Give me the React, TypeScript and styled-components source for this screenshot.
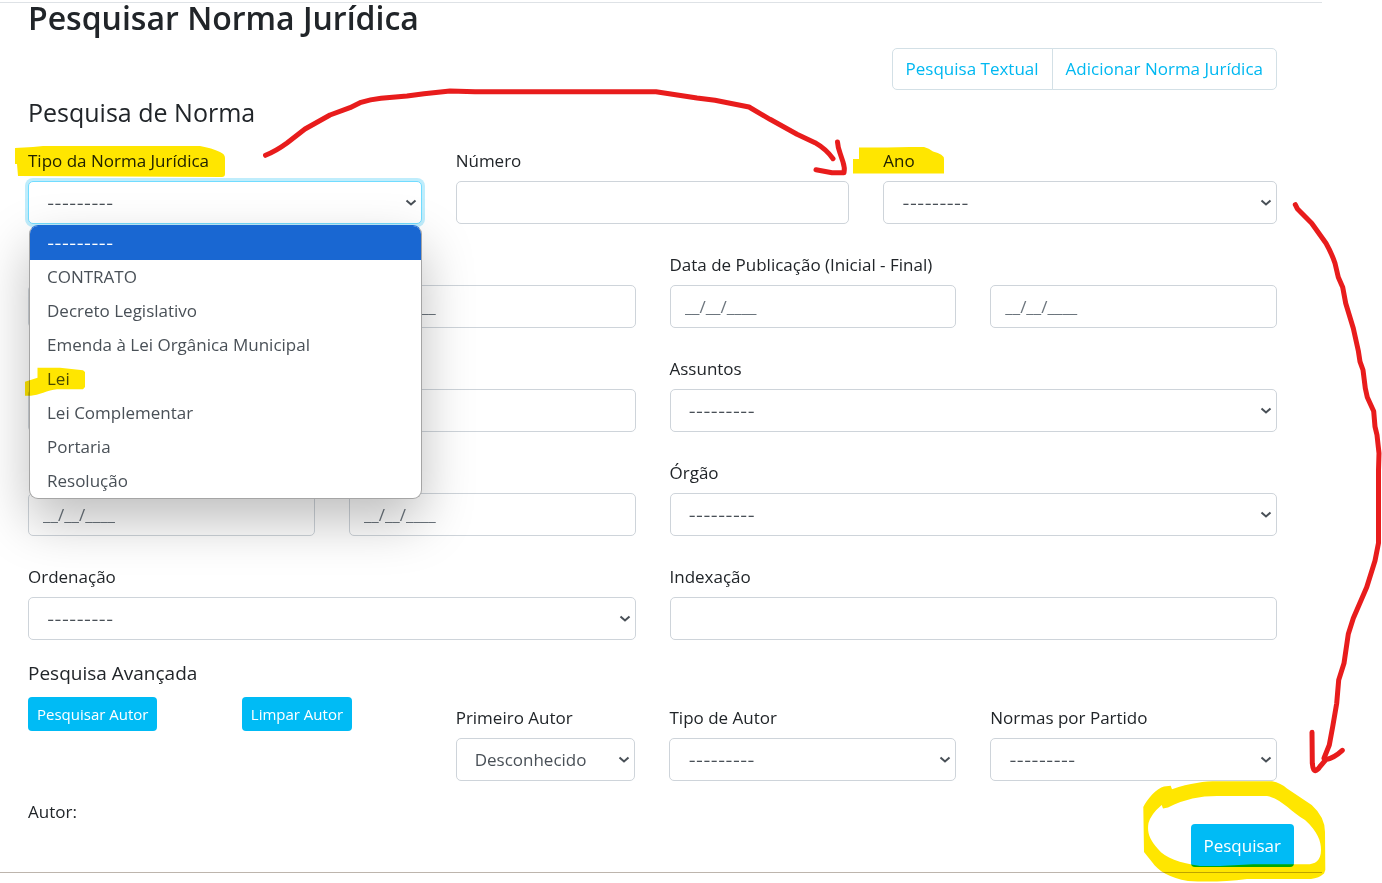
import React from "react";
import styled, { createGlobalStyle, css } from "styled-components";

const GlobalStyle = createGlobalStyle`
  *, *::before, *::after { box-sizing: border-box; }
  html { background: #fff; }
  body {
    margin: 0;
    background: #fff;
    color: #212529;
    font-family: "Open Sans", "Noto Sans", sans-serif;
    font-size: 17px;
    line-height: 26px;
  }
`;

const Page = styled.div`
  position: relative;
  padding: 2px 60px 10px 0;
  min-height: 100vh;
`;

const Main = styled.main`
  border-top: 1px solid #dee2e6;
  border-bottom: 1px solid #bdb5ad;
  padding: 0 45px 5px 28px;
`;

const Title = styled.h1`
  margin: 0;
  font-size: 32px;
  line-height: 30px;
  font-weight: 600;
`;

const Actions = styled.nav`
  display: flex;
  justify-content: flex-end;
  margin-top: 15px;
`;

const ActionLink = styled.a`
  padding: 7px 13px;
  border: 1px solid #d3e0e6;
  color: #00b8f1;
  text-decoration: none;

  &:first-child { border-radius: 5px 0 0 5px; }
  &:last-child { border-radius: 0 5px 5px 0; }
  & + & { margin-left: -1px; }
`;

const Legend = styled.h2`
  margin: 6px 0 20px;
  font-size: 25px;
  line-height: 32px;
  font-weight: 400;
`;

const Grid = styled.div`
  display: grid;
  grid-template-columns: repeat(12, minmax(0, 1fr));
  gap: 28px 34px;
  align-items: end;
`;

const Cell = styled.div<{ $span: number }>`
  position: relative;
  grid-column: span ${(p) => p.$span};
`;

const Label = styled.label`
  display: block;
  margin-bottom: 7px;
`;

const control = css`
  display: block;
  width: 100%;
  height: 43px;
  border: 1px solid #ced4da;
  border-radius: 5px;
  background: #fff;
  color: #495057;
  font: inherit;
  outline: none;
`;

const dashes = css`
  font-family: Inter, "Open Sans", sans-serif;
  font-size: 16px;
`;

const Input = styled.input`
  ${control}
  padding: 0 14px;
  &::placeholder { color: #6c757d; opacity: 1; }
`;

const NativeSelect = styled.select<{ $focused?: boolean; $empty?: boolean }>`
  ${control}
  appearance: none;
  padding: 0 24px 0 18px;
  ${(p) => p.$empty && dashes}
  ${(p) => p.$focused && css`
    border-color: #72dcff;
    box-shadow: 0 0 0 3px #bfedfc;
  `}
`;

const SelectBox = styled.div`
  position: relative;
`;

const Chevron = styled.svg`
  position: absolute;
  right: 5px;
  top: 17px;
  pointer-events: none;
`;

const Options = styled.ul`
  position: absolute;
  z-index: 2;
  top: calc(100% + 1px);
  left: 1px;
  right: 0;
  margin: 0;
  padding: 0;
  list-style: none;
  overflow: hidden;
  border: 1px solid #a5a5a5;
  border-top-color: #1967d2;
  border-radius: 9px;
  background: #fff;
  color: #495057;
  box-shadow: 0 22px 52px rgba(0, 0, 0, 0.26);
`;

const Option = styled.li<{ $active: boolean }>`
  padding: 4px 17px;
  background: ${(p) => (p.$active ? "#1967d2" : "transparent")};
  color: ${(p) => (p.$active ? "#fff" : "inherit")};
  ${(p) => p.$active && dashes}
`;

const Subtitle = styled.h3`
  margin: 19px 0 10px;
  font-size: 19px;
  line-height: 28px;
  font-weight: 400;
`;

const AdvancedGrid = styled(Grid)`
  align-items: start;
`;

const Field = styled.div`
  padding-top: 8px;
`;

const Button = styled.button<{ $small?: boolean }>`
  border: 0;
  border-radius: 4px;
  background: #00bbf5;
  color: #fff;
  font: inherit;
  white-space: nowrap;
  ${(p) => p.$small
    ? css`height: 34px; padding: 0 9px; font-size: 15px;`
    : css`height: 43px; padding: 0 13px;`}
`;

const Author = styled.p`
  margin: 18px 0 0;
`;

const Submit = styled.div`
  display: flex;
  justify-content: flex-end;
  margin: -1px -17px 0 0;
`;

const Overlay = styled.svg<{ $multiply?: boolean }>`
  position: absolute;
  z-index: 3;
  top: 0;
  left: 0;
  pointer-events: none;
  mix-blend-mode: ${(p) => (p.$multiply ? "multiply" : "normal")};
`;

const EMPTY = "---------";
const TYPES = [
  EMPTY,
  "CONTRATO",
  "Decreto Legislativo",
  "Emenda à Lei Orgânica Municipal",
  "Lei",
  "Lei Complementar",
  "Portaria",
  "Resolução",
];

type SelectProps = { id: string; value?: string; focused?: boolean; options?: string[] };

function Select({ id, value = EMPTY, focused, options = [value] }: SelectProps) {
  return (
    <SelectBox>
      <NativeSelect id={id} defaultValue={value} $focused={focused} $empty={value === EMPTY}>
        {options.map((o) => <option key={o}>{o}</option>)}
      </NativeSelect>
      <Chevron width="12" height="9" viewBox="0 0 12 9" fill="none" stroke="#495057" strokeWidth="2">
        <path d="M1.5 2.5 L6 6.5 L10.5 2.5" />
      </Chevron>
    </SelectBox>
  );
}

function DateInput({ name }: { name: string }) {
  return <Input id={name} aria-label={name} placeholder="__/__/____" />;
}

export default function App() {
  return (
    <>
      <GlobalStyle />
      <Page>
        <Main>
          <Title>Pesquisar Norma Jurídica</Title>
          <Actions>
            <ActionLink href="#textual">Pesquisa Textual</ActionLink>
            <ActionLink href="#adicionar">Adicionar Norma Jurídica</ActionLink>
          </Actions>
          <form onSubmit={(e) => e.preventDefault()}>
            <Legend>Pesquisa de Norma</Legend>
            <Grid>
              <Cell $span={4}>
                <Label htmlFor="tipo">Tipo da Norma Jurídica</Label>
                <Select id="tipo" focused options={TYPES} />
                <Options role="listbox" aria-label="Tipo da Norma Jurídica">
                  {TYPES.map((t, i) => (
                    <Option key={t} role="option" aria-selected={i === 0} $active={i === 0}>{t}</Option>
                  ))}
                </Options>
              </Cell>
              <Cell $span={4}>
                <Label htmlFor="numero">Número</Label>
                <Input id="numero" />
              </Cell>
              <Cell $span={4}>
                <Label htmlFor="ano">Ano</Label>
                <Select id="ano" />
              </Cell>

              <Cell $span={3}><DateInput name="data-inicial" /></Cell>
              <Cell $span={3}><DateInput name="data-final" /></Cell>
              <Cell $span={3}>
                <Label htmlFor="publicacao-inicial">Data de Publicação (Inicial - Final)</Label>
                <DateInput name="publicacao-inicial" />
              </Cell>
              <Cell $span={3}><DateInput name="publicacao-final" /></Cell>

              <Cell $span={6}><Input id="ementa" aria-label="ementa" /></Cell>
              <Cell $span={6}>
                <Label htmlFor="assuntos">Assuntos</Label>
                <Select id="assuntos" />
              </Cell>

              <Cell $span={3}><DateInput name="vigencia-inicial" /></Cell>
              <Cell $span={3}><DateInput name="vigencia-final" /></Cell>
              <Cell $span={6}>
                <Label htmlFor="orgao">Órgão</Label>
                <Select id="orgao" />
              </Cell>

              <Cell $span={6}>
                <Label htmlFor="ordenacao">Ordenação</Label>
                <Select id="ordenacao" />
              </Cell>
              <Cell $span={6}>
                <Label htmlFor="indexacao">Indexação</Label>
                <Input id="indexacao" />
              </Cell>
            </Grid>

            <Subtitle>Pesquisa Avançada</Subtitle>
            <AdvancedGrid>
              <Cell $span={2}><Button type="button" $small>Pesquisar Autor</Button></Cell>
              <Cell $span={2}><Button type="button" $small>Limpar Autor</Button></Cell>
              <Cell $span={2}>
                <Field>
                  <Label htmlFor="primeiro">Primeiro Autor</Label>
                  <Select id="primeiro" value="Desconhecido" />
                </Field>
              </Cell>
              <Cell $span={3}>
                <Field>
                  <Label htmlFor="tipo-autor">Tipo de Autor</Label>
                  <Select id="tipo-autor" />
                </Field>
              </Cell>
              <Cell $span={3}>
                <Field>
                  <Label htmlFor="partido">Normas por Partido</Label>
                  <Select id="partido" />
                </Field>
              </Cell>
            </AdvancedGrid>
            <Author>Autor:</Author>
            <Submit><Button type="submit">Pesquisar</Button></Submit>
          </form>
        </Main>

        <Overlay $multiply width="1382" height="883" viewBox="0 0 1382 883" fill="#ffe600" aria-hidden="true">
          <path d="M15 148 L33 147 L43 146 L200 146 Q212 148 220 152 Q225 154 225 158 V174 Q225 177 222 177 L18 176 L17 164 H15Z" />
          <path d="M859 147.5 H887 L910 147 H924 Q929 148 933 151.5 Q944 154 944 159 V173.5 H853 V159 H859Z" />
          <path d="M37.5 367.7 H60 L83 370.3 L85 372 V387 L83 389.3 H57 C48 390 38 395.5 31 395.7 H25 V381.7 L37.5 377.7Z" />
          <path
            fillRule="evenodd"
            d="M1170.7 785.7 L1172 789.3 C1190 783 1205 781.3 1217 781.3 H1272 Q1281 783 1287 788.5 L1311.7 805 Q1325 817 1325 832 L1325.3 870 L1324 873.5 Q1319 878 1311 879 H1247 C1225 882 1205 882 1188 881 C1170 878 1158 871 1152 862 L1144 852 L1143.3 807 C1147 799 1157 788 1164 786.5Z
               M1161.7 805 L1163 808.5 L1168 807.5 C1185 799 1200 796 1217 796 H1267 C1282 799 1291 812 1305 820 C1318 832 1321 841 1321 850 C1321 861 1315 864.3 1307 864.3 H1253 L1220 866 H1200 C1180 863 1165 858 1158 849 C1149 839 1147 832 1148.5 823 Q1151 814 1161.7 805Z"
          />
        </Overlay>
        <Overlay
          width="1382" height="883" viewBox="0 0 1382 883" aria-hidden="true"
          fill="none" stroke="#e81c1c" strokeWidth="5" strokeLinecap="round" strokeLinejoin="round"
        >
          <path d="M265.5 155.3 Q276 151 287 143 L305 129 L330 115 L350 107.7 L361 102.3 Q370 99.5 381 98.3 L407 96 L424 93.7 L450 91 L475 91.7 H656 L697 98 L715 100.3 L730 103.3 L749 107 L770 119.3 L797 134.3 L815 142.7 Q826 149 833 158.7" />
          <path d="M837.5 142 Q838 148 840 153 L843 162 Q845 168 844 172.7 H832 L816 169.7" />
          <path d="M1295.3 204.7 L1297.3 208.7 L1311.7 223.3 L1326 243.3 Q1332 254 1335 263.3 L1338.3 277.3 L1342.7 287.3 L1345.7 303.3 L1353.3 328.3 L1358.3 350.7 L1360 361.7 L1363 370 L1365.3 388.3 L1367.3 397.3 L1373.7 411.3 L1375 426.7 L1377 435 L1379 453.3 L1378.5 470 V543 L1375 560.7 L1366.7 587.3 L1353.3 618.3 L1348.3 634 L1344 663.3 L1338.7 680 L1336.7 703.3 L1332.7 726.7 L1329.3 745 L1324 758.3" />
          <path d="M1312 732.3 L1312.3 763.3 Q1313 770.7 1315 770.7 Q1318 770 1320 766.5 L1326 759.5 Q1334 758 1342.3 750.3" />
        </Overlay>
      </Page>
    </>
  );
}
